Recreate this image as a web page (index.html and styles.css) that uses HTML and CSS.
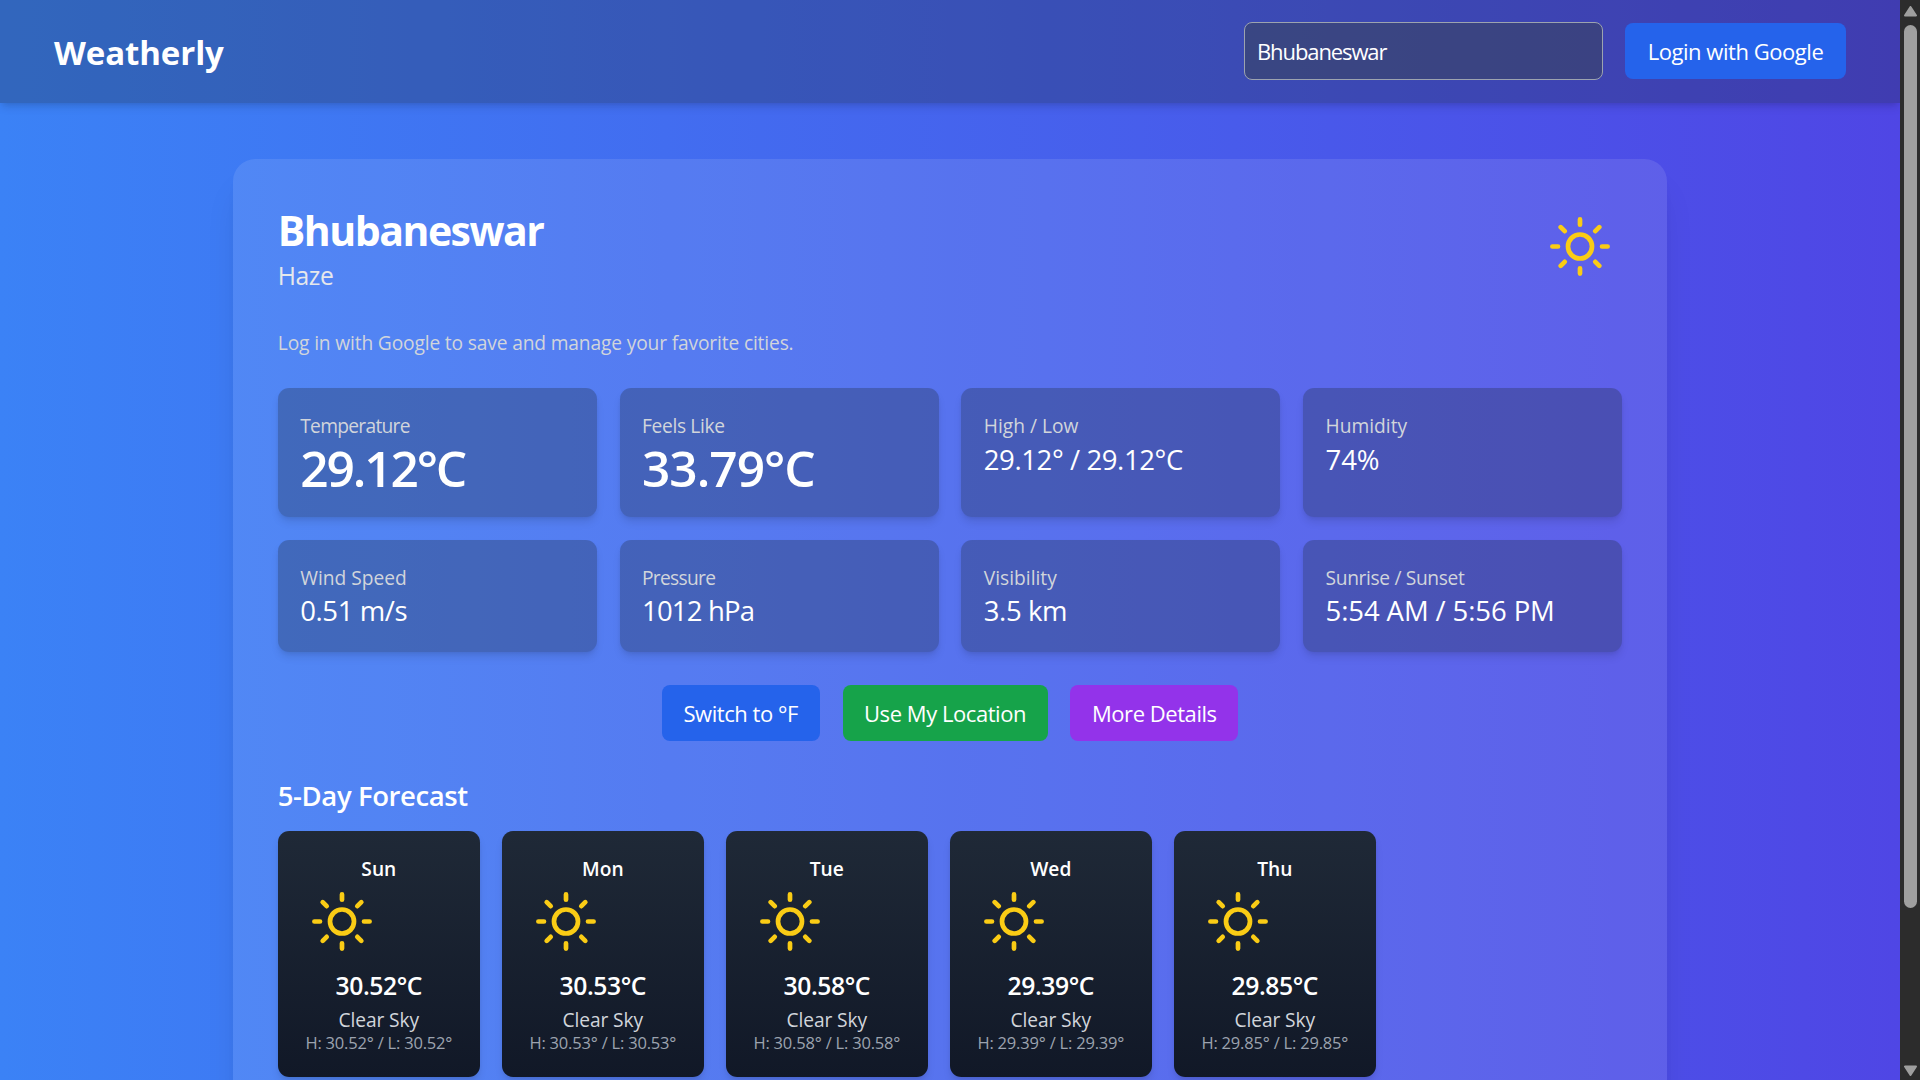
FILE: index.html
```html
<!DOCTYPE html>
<html lang="en">
<head>
<meta charset="utf-8">
<title>Weatherly</title>
<link rel="stylesheet" href="styles.css">
</head>
<body>
<svg class="sprite" width="0" height="0">
  <symbol id="sun" viewBox="0 0 84 84">
    <g fill="none" stroke="#facc15" stroke-width="4.7" stroke-linecap="round">
      <circle cx="42" cy="40.5" r="12"/>
      <path d="M42 13.4v5.3M42 62.3v5.3M14.4 40.5h5.6M64 40.5h5.6M22.7 21.2l4 4M57.3 55.8l4 4M22.7 59.8l4-4M57.3 25.2l4-4"/>
    </g>
  </symbol>
</svg>
<div class="window">
  <div class="page">
    <header class="topbar">
      <h1 class="brand">Weatherly</h1>
      <div class="tools">
        <input class="search" type="text" value="Bhubaneswar">
        <button class="btn blue login">Login with Google</button>
      </div>
    </header>
    <main class="panel">
      <div class="place">
        <div>
          <h2 class="city">Bhubaneswar</h2>
          <p class="sky">Haze</p>
        </div>
        <svg class="sun"><use href="#sun"/></svg>
      </div>
      <p class="hint">Log in with Google to save and manage your favorite cities.</p>
      <div class="stats">
        <div class="stat"><p class="label tight">Temperature</p><p class="big">29.12°C</p></div>
        <div class="stat"><p class="label snug">Feels Like</p><p class="big wide">33.79°C</p></div>
        <div class="stat"><p class="label">High / Low</p><p class="value snug">29.12° / 29.12°C</p></div>
        <div class="stat"><p class="label">Humidity</p><p class="value">74%</p></div>
        <div class="stat"><p class="label">Wind Speed</p><p class="value snug">0.51 m/s</p></div>
        <div class="stat"><p class="label tight">Pressure</p><p class="value tight">1012 hPa</p></div>
        <div class="stat"><p class="label">Visibility</p><p class="value snug">3.5 km</p></div>
        <div class="stat"><p class="label snug">Sunrise / Sunset</p><p class="value">5:54 AM / 5:56 PM</p></div>
      </div>
      <div class="actions">
        <button class="btn blue unit">Switch to °F</button>
        <button class="btn green locate">Use My Location</button>
        <button class="btn purple more">More Details</button>
      </div>
      <h3 class="heading">5-Day Forecast</h3>
      <div class="days">
        <div class="day"><p class="name">Sun</p><svg class="sun"><use href="#sun"/></svg><p class="temp">30.52°C</p><p class="desc">Clear Sky</p><p class="range">H: 30.52° / L: 30.52°</p></div>
        <div class="day"><p class="name">Mon</p><svg class="sun"><use href="#sun"/></svg><p class="temp">30.53°C</p><p class="desc">Clear Sky</p><p class="range">H: 30.53° / L: 30.53°</p></div>
        <div class="day"><p class="name">Tue</p><svg class="sun"><use href="#sun"/></svg><p class="temp">30.58°C</p><p class="desc">Clear Sky</p><p class="range">H: 30.58° / L: 30.58°</p></div>
        <div class="day"><p class="name">Wed</p><svg class="sun"><use href="#sun"/></svg><p class="temp">29.39°C</p><p class="desc">Clear Sky</p><p class="range">H: 29.39° / L: 29.39°</p></div>
        <div class="day"><p class="name">Thu</p><svg class="sun"><use href="#sun"/></svg><p class="temp">29.85°C</p><p class="desc">Clear Sky</p><p class="range">H: 29.85° / L: 29.85°</p></div>
      </div>
    </main>
  </div>
  <div class="scrollbar">
    <svg width="13" height="11" viewBox="0 0 13 11"><path d="M6.5 1L12 9.5H1z" fill="#9f9f9f" stroke="#9f9f9f" stroke-width="2" stroke-linejoin="round"/></svg>
    <div class="thumb"></div>
    <svg class="down" width="13" height="11" viewBox="0 0 13 11"><path d="M6.5 10L1 1.5h11z" fill="#9f9f9f" stroke="#9f9f9f" stroke-width="2" stroke-linejoin="round"/></svg>
  </div>
</div>
</body>
</html>
```
FILE: styles.css
```css
* { box-sizing: border-box; margin: 0; padding: 0; }
body { width: 1920px; height: 1080px; overflow: hidden; font-family: "Open Sans", "Noto Sans", sans-serif; color: #fff; }
.sprite { position: absolute; }
.window { display: flex; width: 1920px; height: 1080px; }
.page { width: 1900px; height: 1080px; overflow: hidden; background: linear-gradient(to right, #3b82f6, #4f46e5); }

.topbar { display: flex; align-items: center; justify-content: space-between; height: 103px; padding: 0 54px 1px; background: rgba(31, 41, 55, .3); box-shadow: 0 5.6px 8.4px -1.4px rgba(0, 0, 0, .12), 0 2.8px 5.6px -2.8px rgba(0, 0, 0, .12); }
.brand { padding-top: 5px; font-size: 33px; line-height: 44.8px; font-weight: 700; letter-spacing: -.1px; }
.tools { display: flex; align-items: center; gap: 22px; }
.search { width: 359px; height: 58px; padding: 0 12px; border: 1px solid #9ca3af; border-radius: 8px; background: rgba(55, 65, 81, .5); color: #fff; font: 400 22px "Open Sans", sans-serif; letter-spacing: -1.1px; }
.btn { height: 56px; border: 0; border-radius: 8px; color: #fff; font: 400 22px/33px "Open Sans", sans-serif; letter-spacing: -.45px; white-space: nowrap; }
.blue { background: #2563eb; }
.green { background: #16a34a; }
.purple { background: #9333ea; }
.login { width: 221px; }
.unit { width: 158px; }
.locate { width: 205px; }
.more { width: 168px; }

.panel { width: 1434px; height: 1100px; margin: 56px auto 0; padding: 44.8px; border-radius: 22.4px; background: rgba(255, 255, 255, .1); box-shadow: 0 28px 35px -7px rgba(0, 0, 0, .1), 0 11px 14px -8px rgba(0, 0, 0, .1); }
.place { display: flex; justify-content: space-between; align-items: center; height: 89.6px; }
.place .sun { margin-bottom: 1.4px; }
.city { padding-top: 1.5px; margin-bottom: -1.5px; font-size: 41px; line-height: 50.4px; font-weight: 700; letter-spacing: -1.5px; }
.sky { padding-top: 1.5px; margin-bottom: -1.5px; font-size: 24.7px; line-height: 39.2px; letter-spacing: -.45px; color: #e5e7eb; }
.sun { display: block; width: 84px; height: 84px; }
.hint { margin-top: 35.6px; font-size: 19.2px; line-height: 28px; letter-spacing: -.15px; color: #d1d5db; }

.stats { display: grid; grid-template-columns: repeat(4, 1fr); gap: 22.8px; margin-top: 31px; }
.stat { padding: 22.4px; border-radius: 11.2px; background: rgba(31, 41, 55, .3); box-shadow: 0 5.6px 8.4px -1.4px rgba(0, 0, 0, .1), 0 2.8px 5.6px -2.8px rgba(0, 0, 0, .1); }
.label { padding-top: 2px; margin-bottom: -2px; font-size: 19.2px; line-height: 28px; color: #d1d5db; }
.label.snug { letter-spacing: -.35px; }
.label.tight { letter-spacing: -.7px; }
.big { padding-top: 1.5px; margin-bottom: -1.5px; font-size: 49.6px; line-height: 56px; font-weight: 600; letter-spacing: -2.1px; }
.big.wide { letter-spacing: -1px; }
.value { padding-top: 1.5px; margin-bottom: -1.5px; font-size: 27.5px; line-height: 39.2px; letter-spacing: -.1px; }
.value.snug { letter-spacing: -.4px; }
.value.tight { letter-spacing: -.8px; }

.actions { display: flex; justify-content: center; gap: 22.8px; margin-top: 33.5px; }
.heading { padding-top: 1.5px; margin-top: 33.6px; font-size: 27.5px; line-height: 39.2px; font-weight: 600; letter-spacing: -.4px; }
.days { display: flex; gap: 22px; margin-top: 15.3px; }
.day { width: 202px; padding: 22.4px; border-radius: 11.2px; background: linear-gradient(#1f2937, #111827); box-shadow: 0 5.6px 8.4px -1.4px rgba(0, 0, 0, .1), 0 2.8px 5.6px -2.8px rgba(0, 0, 0, .1); text-align: center; white-space: nowrap; }
.name { padding-top: 2px; margin-bottom: -2px; font-size: 19.2px; line-height: 28px; font-weight: 600; }
.temp { padding-top: 1px; margin-bottom: -1px; font-size: 24.7px; line-height: 39.2px; font-weight: 600; letter-spacing: -.4px; }
.desc { padding-top: 1.5px; margin-bottom: -1.5px; font-size: 19.2px; line-height: 28px; letter-spacing: -.1px; color: #d1d5db; }
.range { font-size: 16.5px; line-height: 22.4px; letter-spacing: -.2px; color: #9ca3af; }

.scrollbar { display: flex; flex-direction: column; align-items: center; width: 20px; height: 1080px; padding: 6px 0 4px 1px; background: #2c2c2c; }
.thumb { width: 13px; height: 883px; margin-top: 8px; border-radius: 7px; background: #9f9f9f; }
.down { margin-top: auto; }
```
